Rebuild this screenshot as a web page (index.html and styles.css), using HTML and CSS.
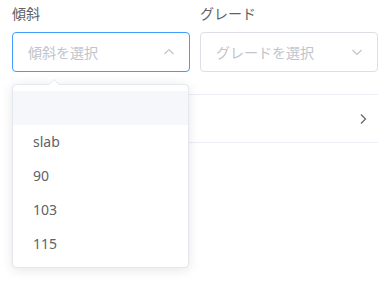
FILE: index.html
```
<!DOCTYPE html>
<html lang="ja">
<head>
    <meta charset="UTF-8">
    <meta name="viewport" content="width=device-width, initial-scale=1.0">
    <title>傾斜とグレード</title>
    <link rel="stylesheet" href="styles.css">
</head>
<body>
    <div class="form">
        <div class="field">
            <label class="label">傾斜</label>
            <div class="select is-focus">
                <span class="placeholder">傾斜を選択</span>
                <svg class="arrow" width="12" height="12" viewBox="0 0 12 12"><polyline points="1.5,8 6,3.5 10.5,8" fill="none" stroke="#c0c4cc" stroke-width="1.2"/></svg>
            </div>
            <div class="dropdown">
                <span class="dropdown-arrow"></span>
                <ul>
                    <li class="hover">&nbsp;</li>
                    <li>slab</li>
                    <li>90</li>
                    <li>103</li>
                    <li>115</li>
                </ul>
            </div>
        </div>
        <div class="field">
            <label class="label">グレード</label>
            <div class="select">
                <span class="placeholder">グレードを選択</span>
                <svg class="arrow" width="12" height="12" viewBox="0 0 12 12"><polyline points="1.5,4 6,8.5 10.5,4" fill="none" stroke="#c0c4cc" stroke-width="1.2"/></svg>
            </div>
        </div>
    </div>

    <div class="row">
        <svg class="chev" width="8" height="12" viewBox="0 0 8 12"><polyline points="2,1.5 6.5,6 2,10.5" fill="none" stroke="#606266" stroke-width="1.2"/></svg>
    </div>
</body>
</html>
```
FILE: styles.css
```
* {
    box-sizing: border-box;
}

html, body {
    height: 100%;
}

body {
    margin: 0;
    padding: 0 14px 0 12px;
    min-height: 307px;
    background: #fff;
    font-family: "Noto Sans", "Noto Sans CJK JP", sans-serif;
    font-size: 14px;
    color: #606266;
}

.form {
    display: grid;
    grid-template-columns: 178px 178px;
    gap: 10px;
}

.field {
    position: relative;
}

.label {
    display: block;
    line-height: 28px;
    height: 32px;
    color: #606266;
}

.select {
    height: 40px;
    border: 1px solid #dcdfe6;
    border-radius: 4px;
    padding: 0 14px 0 15px;
    display: flex;
    align-items: center;
    justify-content: space-between;
}

.select.is-focus {
    border-color: #409eff;
}

.placeholder {
    color: #c0c4cc;
}

.arrow {
    display: block;
}

.dropdown {
    position: absolute;
    top: 84px;
    left: 0;
    width: 177px;
    background: #fff;
    border: 1px solid #e4e7ed;
    border-radius: 4px;
    box-shadow: 0 2px 12px 0 rgba(0, 0, 0, 0.1);
    z-index: 10;
}

.dropdown-arrow {
    position: absolute;
    top: -6px;
    left: 35px;
    width: 0;
    height: 0;
    border-left: 6px solid transparent;
    border-right: 6px solid transparent;
    border-bottom: 6px solid #e4e7ed;
}

.dropdown-arrow::after {
    content: "";
    position: absolute;
    top: 1px;
    left: -6px;
    border-left: 6px solid transparent;
    border-right: 6px solid transparent;
    border-bottom: 6px solid #fff;
}

.dropdown ul {
    list-style: none;
    margin: 0;
    padding: 6px 0;
}

.dropdown li {
    height: 34px;
    line-height: 34px;
    padding: 0 20px;
    color: #606266;
}

.dropdown li.hover {
    background: #f5f7fa;
}

.row {
    margin-top: 22px;
    height: 49px;
    border-top: 1px solid #ebeef5;
    border-bottom: 1px solid #ebeef5;
    display: flex;
    align-items: center;
    justify-content: flex-end;
    padding-right: 11px;
}
```
